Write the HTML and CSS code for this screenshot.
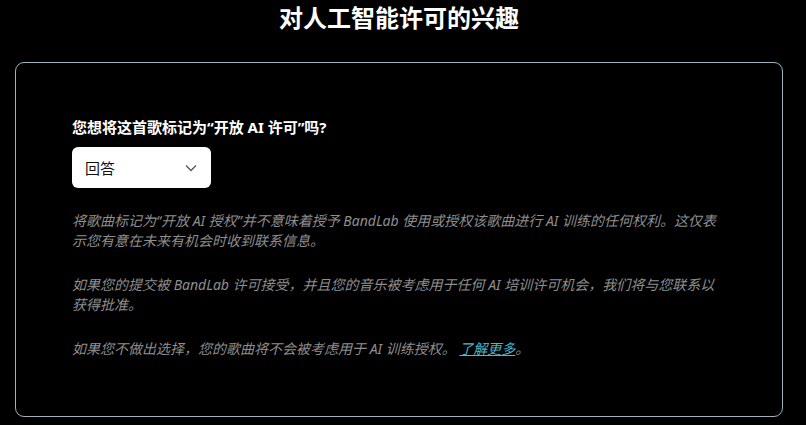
FILE: index.html
```html
<!DOCTYPE html>
<html lang="zh">
<head>
<meta charset="utf-8">
<link rel="stylesheet" href="styles.css">
</head>
<body>
<h1 class="title">对人工智能许可的兴趣</h1>
<div class="card">
  <div class="question">您想将这首歌标记为“开放 AI 许可”吗?</div>
  <div class="select">
    <span>回答</span>
    <svg class="chev" width="12" height="8" viewBox="0 0 12 8"><path d="M1 1.5 L6 6.5 L11 1.5" fill="none" stroke="#555" stroke-width="1.3"/></svg>
  </div>
  <p class="note">将歌曲标记为“开放 AI 授权”并不意味着授予 BandLab 使用或授权该歌曲进行 AI 训练的任何权利。这仅表示您有意在未来有机会时收到联系信息。</p>
  <p class="note">如果您的提交被 BandLab 许可接受，并且您的音乐被考虑用于任何 AI 培训许可机会，我们将与您联系以获得批准。</p>
  <p class="note">如果您不做出选择，您的歌曲将不会被考虑用于 AI 训练授权。 <a class="link" href="#">了解更多</a>。</p>
</div>
</body>
</html>
```
FILE: styles.css
```css
html, body {
  margin: 0;
  padding: 0;
  background: #000;
  font-family: "Noto Sans", "Noto Sans CJK SC", sans-serif;
}
body {
  padding: 0 23px 0 15px;
}
.title {
  margin: 0;
  height: 62px;
  text-align: center;
  color: #fff;
  font-size: 24px;
  font-weight: 700;
  line-height: 36px;
}
.card {
  border: 1px solid #9fb3ba;
  border-radius: 9px;
  height: 355px;
  box-sizing: border-box;
  padding: 52px 56px 0 56px;
}
.question {
  color: #fff;
  font-size: 15px;
  font-weight: 700;
  line-height: 24px;
}
.select {
  margin-top: 8px;
  width: 139px;
  height: 41px;
  box-sizing: border-box;
  background: #fff;
  border-radius: 6px;
  display: flex;
  align-items: center;
  justify-content: space-between;
  padding: 0 14px 0 13px;
  color: #111;
  font-size: 15px;
}
.note {
  color: #8e8e8e;
  font-size: 14px;
  font-style: italic;
  line-height: 20px;
  margin: 23px 0 0 0;
}
.note + .note {
  margin-top: 24px;
}
.link {
  color: #4bb8cf;
  text-decoration: underline;
}
```
